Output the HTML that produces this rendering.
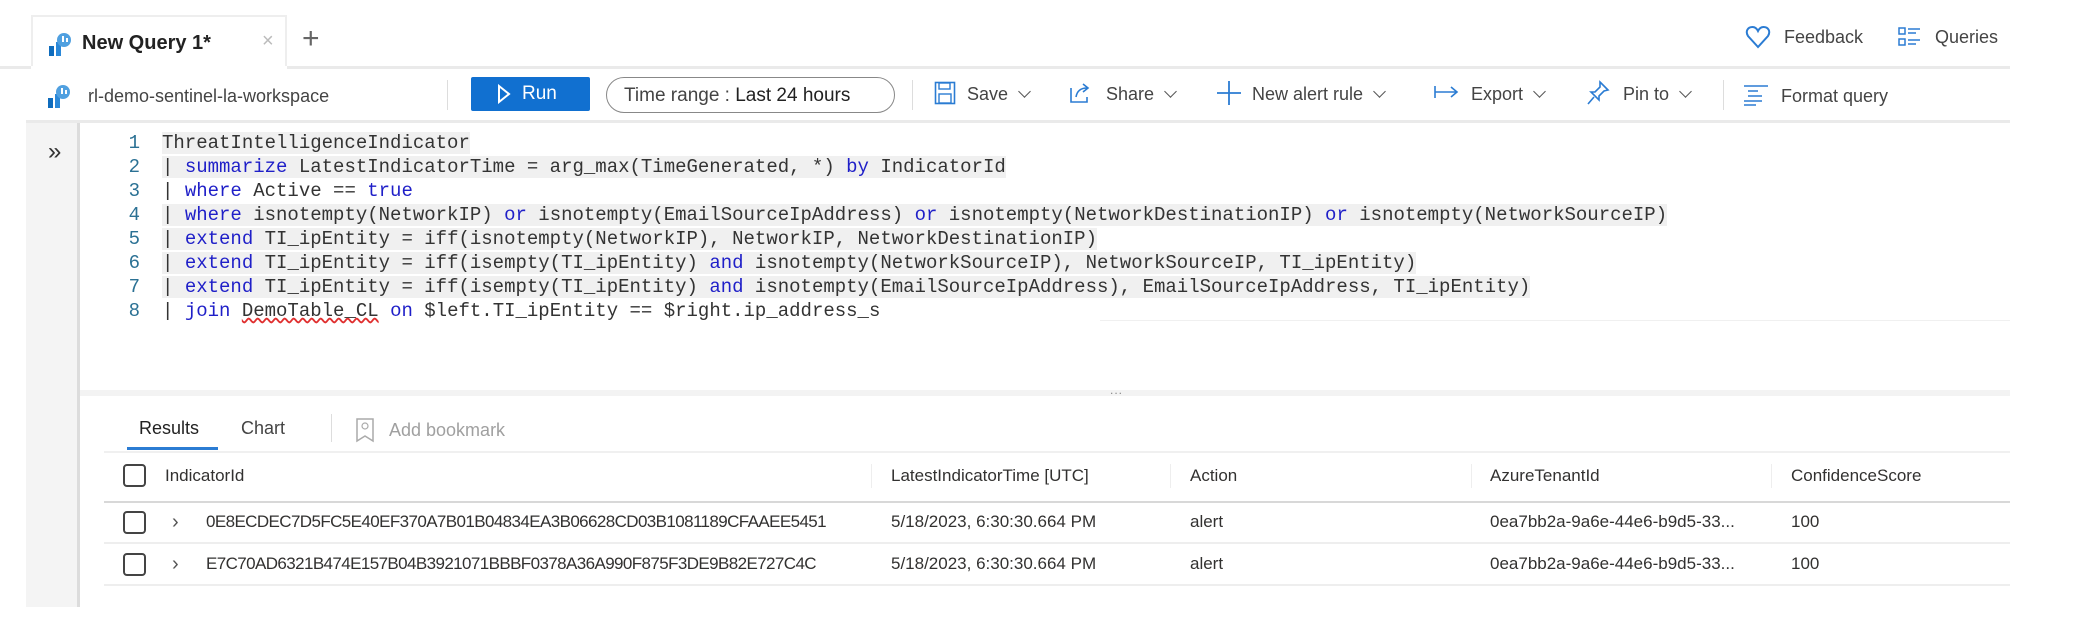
<!DOCTYPE html>
<html><head><meta charset="utf-8"><style>
*{margin:0;padding:0;box-sizing:border-box}
body{width:2078px;height:624px;background:#fff;position:relative;overflow:hidden;font-family:"Liberation Sans",sans-serif;color:#323130}
.a{position:absolute;white-space:nowrap}
.t{font-size:18px;line-height:24px}
.code{font-family:"Liberation Mono",monospace;font-size:19px;line-height:24px;color:#333}
.k{color:#1f1fc8}
.ln{color:#2b7194;font-family:"Liberation Mono",monospace;font-size:19px;width:30px;text-align:right}
.hl{background:#f0f0f0}
.chev{display:inline-block;width:9px;height:9px;border-right:1.5px solid #555;border-bottom:1.5px solid #555;transform:rotate(45deg);margin-left:12px;position:relative;top:-4px}
.cb{position:absolute;width:23px;height:23px;border:2px solid #444;border-radius:4px}
.cell{font-size:17px;color:#323130}
</style></head><body>
<!-- tab -->
<div class="a" style="left:31px;top:15px;width:256px;height:53px;border:2px solid #eee;border-bottom:none;background:#fff"></div>
<div class="a" style="left:0;top:66px;width:2010px;height:3px;background:#eaeaea"></div>
<div class="a" style="left:31px;top:66px;width:256px;height:3px;background:#fff"></div>
<svg class="a" style="left:48px;top:30px" width="24" height="28" viewBox="0 0 24 28"><rect x="1" y="16" width="5" height="10" fill="#0f6cbd"/><rect x="8" y="12" width="5" height="14" fill="#2b88d8"/><circle cx="16" cy="10" r="7" fill="#50a0e0"/><rect x="14" y="6" width="2" height="6" fill="#fff"/><rect x="18" y="8" width="2" height="4" fill="#fff"/></svg>
<div class="a t" style="left:82px;top:31px;font-size:20px;font-weight:bold;color:#222">New Query 1*</div>
<div class="a" style="left:262px;top:30px;font-size:20px;color:#bbb">×</div>
<div class="a" style="left:302px;top:22px;font-size:30px;color:#666;font-weight:300">+</div>
<!-- right top -->
<svg class="a" style="left:1745px;top:24px" width="26" height="26" viewBox="0 0 26 26"><path d="M13 23 L3 12 C0 7 3 3 7.5 3 C10 3 12 5 13 7 C14 5 16 3 18.5 3 C23 3 26 7 23 12 Z" fill="none" stroke="#2b7cd3" stroke-width="2"/></svg>
<div class="a t" style="left:1784px;top:25px;color:#444">Feedback</div>
<svg class="a" style="left:1898px;top:26px" width="24" height="22" viewBox="0 0 24 22"><rect x="1" y="2" width="6" height="6" fill="none" stroke="#2b7cd3" stroke-width="1.5"/><rect x="1" y="13" width="6" height="6" fill="none" stroke="#2b7cd3" stroke-width="1.5"/><path d="M10 3h12M10 7h8M10 14h12M10 18h8" stroke="#2b7cd3" stroke-width="1.5"/></svg>
<div class="a t" style="left:1935px;top:25px;color:#444">Queries</div>
<!-- toolbar -->
<svg class="a" style="left:47px;top:82px" width="24" height="28" viewBox="0 0 24 28"><rect x="1" y="16" width="5" height="10" fill="#0f6cbd"/><rect x="8" y="12" width="5" height="14" fill="#2b88d8"/><circle cx="16" cy="10" r="7" fill="#50a0e0"/><rect x="14" y="6" width="2" height="6" fill="#fff"/><rect x="18" y="8" width="2" height="4" fill="#fff"/></svg>
<div class="a t" style="left:88px;top:84px;color:#444">rl-demo-sentinel-la-workspace</div>
<div class="a" style="left:447px;top:80px;width:1px;height:30px;background:#ddd"></div>
<div class="a" style="left:471px;top:77px;width:119px;height:34px;background:#1170d0;border-radius:2px"></div>
<svg class="a" style="left:497px;top:84px" width="14" height="20" viewBox="0 0 14 20"><path d="M2 2 L12 10 L2 18 Z" fill="none" stroke="#fff" stroke-width="2"/></svg>
<div class="a t" style="left:522px;top:82px;color:#fff;font-size:19px">Run</div>
<div class="a" style="left:606px;top:77px;width:289px;height:36px;border:1.5px solid #888;border-radius:18px"></div>
<div class="a t" style="left:624px;top:84px;color:#444;font-size:19px">Time range : <span style="color:#222">Last 24 hours</span></div>
<div class="a" style="left:912px;top:80px;width:1px;height:30px;background:#ddd"></div>
<svg class="a" style="left:934px;top:81px" width="22" height="24" viewBox="0 0 22 24"><rect x="1.5" y="1.5" width="19" height="21" fill="none" stroke="#2b7cd3" stroke-width="1.6"/><rect x="5" y="2" width="11" height="6" fill="none" stroke="#2b7cd3" stroke-width="1.4"/><rect x="5" y="13" width="12" height="9" fill="none" stroke="#2b7cd3" stroke-width="1.4"/></svg>
<div class="a t" style="left:967px;top:82px;color:#444">Save<span class="chev"></span></div>
<svg class="a" style="left:1068px;top:80px" width="24" height="24" viewBox="0 0 24 24"><path d="M3 8v14h16v-5" fill="none" stroke="#2b7cd3" stroke-width="1.6"/><path d="M8 17c1-6 5-9 11-9M15 4l5 4-5 4" fill="none" stroke="#2b7cd3" stroke-width="1.6"/></svg>
<div class="a t" style="left:1106px;top:82px;color:#444">Share<span class="chev"></span></div>
<svg class="a" style="left:1216px;top:80px" width="26" height="26" viewBox="0 0 26 26"><path d="M13 1v24M1 13h24" stroke="#2b7cd3" stroke-width="1.8"/></svg>
<div class="a t" style="left:1252px;top:82px;color:#444">New alert rule<span class="chev"></span></div>
<svg class="a" style="left:1434px;top:84px" width="26" height="16" viewBox="0 0 26 16"><path d="M1 2v12M1 8h22M17 3l6 5-6 5" fill="none" stroke="#2b7cd3" stroke-width="1.6"/></svg>
<div class="a t" style="left:1471px;top:82px;color:#444">Export<span class="chev"></span></div>
<svg class="a" style="left:1586px;top:80px" width="24" height="26" viewBox="0 0 24 26"><path d="M14 2l8 8-4 1-5 5 0 4-8-8 4 0 5-5z M8 17l-6 7" fill="none" stroke="#2b7cd3" stroke-width="1.6"/></svg>
<div class="a t" style="left:1623px;top:82px;color:#444">Pin to<span class="chev"></span></div>
<div class="a" style="left:1723px;top:80px;width:1px;height:30px;background:#ddd"></div>
<svg class="a" style="left:1742px;top:84px" width="28" height="22" viewBox="0 0 28 22"><path d="M2 2h24M6 7h10M6 12h14M2 17h18M2 21h12" stroke="#2b7cd3" stroke-width="1.6"/></svg>
<div class="a t" style="left:1781px;top:84px;color:#444">Format query</div>
<div class="a" style="left:26px;top:120px;width:1984px;height:3px;background:#eaeaea"></div>
<!-- left gutter -->
<div class="a" style="left:26px;top:123px;width:52px;height:484px;background:#f4f4f4"></div>
<div class="a" style="left:77px;top:123px;width:3px;height:484px;background:#dcdcdc"></div>
<div class="a" style="left:48px;top:138px;font-size:24px;color:#333">»</div>
<!-- code -->
<div class="a ln" style="left:110px;top:131px;line-height:24px">1<br>2<br>3<br>4<br>5<br>6<br>7<br>8</div>
<div class="a code" style="left:162px;top:131px">
<div><span class="hl">ThreatIntelligenceIndicator</span></div>
<div><span class="hl">| <span class="k">summarize</span> LatestIndicatorTime = arg_max(TimeGenerated, *) <span class="k">by</span> IndicatorId</span></div>
<div>| <span class="k">where</span> Active == <span class="k">true</span></div>
<div><span class="hl">| <span class="k">where</span> isnotempty(NetworkIP) <span class="k">or</span> isnotempty(EmailSourceIpAddress) <span class="k">or</span> isnotempty(NetworkDestinationIP) <span class="k">or</span> isnotempty(NetworkSourceIP)</span></div>
<div><span class="hl">| <span class="k">extend</span> TI_ipEntity = iff(isnotempty(NetworkIP), NetworkIP, NetworkDestinationIP)</span></div>
<div><span class="hl">| <span class="k">extend</span> TI_ipEntity = iff(isempty(TI_ipEntity) <span class="k">and</span> isnotempty(NetworkSourceIP), NetworkSourceIP, TI_ipEntity)</span></div>
<div><span class="hl">| <span class="k">extend</span> TI_ipEntity = iff(isempty(TI_ipEntity) <span class="k">and</span> isnotempty(EmailSourceIpAddress), EmailSourceIpAddress, TI_ipEntity)</span></div>
<div>| <span class="k">join</span> <span style="text-decoration:underline wavy #e03030">DemoTable_CL</span> <span class="k">on</span> $left.TI_ipEntity == $right.ip_address_s</div>
</div>
<div class="a" style="left:1100px;top:320px;width:910px;height:1px;background:#f0f0f0"></div>
<!-- splitter -->
<div class="a" style="left:80px;top:390px;width:1930px;height:6px;background:#f3f3f3"></div>
<div class="a" style="left:1110px;top:383px;font-size:12px;color:#888;letter-spacing:1px">...</div>
<!-- result tabs -->
<div class="a t" style="left:139px;top:416px;color:#222">Results</div>
<div class="a" style="left:127px;top:447px;width:91px;height:3px;background:#2b7cd3"></div>
<div class="a t" style="left:241px;top:416px;color:#444">Chart</div>
<div class="a" style="left:331px;top:414px;width:1px;height:28px;background:#ddd"></div>
<svg class="a" style="left:355px;top:417px" width="20" height="26" viewBox="0 0 20 26"><path d="M2 2h16v22l-8-5-8 5z" fill="none" stroke="#aaa" stroke-width="1.5"/><circle cx="10" cy="9" r="3" fill="none" stroke="#aaa" stroke-width="1.2"/></svg>
<div class="a t" style="left:389px;top:418px;color:#a0a0a0">Add bookmark</div>
<div class="a" style="left:104px;top:451px;width:1906px;height:2px;background:#f0f0f0"></div>
<!-- header -->
<div class="cb" style="left:123px;top:464px"></div>
<div class="a cell" style="left:165px;top:466px">IndicatorId</div>
<div class="a" style="left:871px;top:464px;width:1px;height:24px;background:#eee"></div>
<div class="a cell" style="left:891px;top:466px">LatestIndicatorTime [UTC]</div>
<div class="a" style="left:1170px;top:464px;width:1px;height:24px;background:#eee"></div>
<div class="a cell" style="left:1190px;top:466px">Action</div>
<div class="a" style="left:1471px;top:464px;width:1px;height:24px;background:#eee"></div>
<div class="a cell" style="left:1490px;top:466px">AzureTenantId</div>
<div class="a" style="left:1771px;top:464px;width:1px;height:24px;background:#eee"></div>
<div class="a cell" style="left:1791px;top:466px">ConfidenceScore</div>
<div class="a" style="left:104px;top:501px;width:1906px;height:2px;background:#d8d8d8"></div>
<!-- rows -->
<div class="cb" style="left:123px;top:511px"></div>
<div class="a cell" style="left:172px;top:511px;font-size:20px;color:#555">›</div>
<div class="a cell" style="left:206px;top:512px;letter-spacing:-0.6px">0E8ECDEC7D5FC5E40EF370A7B01B04834EA3B06628CD03B1081189CFAAEE5451</div>
<div class="a cell" style="left:891px;top:512px">5/18/2023, 6:30:30.664 PM</div>
<div class="a cell" style="left:1190px;top:512px">alert</div>
<div class="a cell" style="left:1490px;top:512px">0ea7bb2a-9a6e-44e6-b9d5-33...</div>
<div class="a cell" style="left:1791px;top:512px">100</div>
<div class="a" style="left:104px;top:542px;width:1906px;height:2px;background:#eee"></div>
<div class="cb" style="left:123px;top:553px"></div>
<div class="a cell" style="left:172px;top:553px;font-size:20px;color:#555">›</div>
<div class="a cell" style="left:206px;top:554px;letter-spacing:-0.6px">E7C70AD6321B474E157B04B3921071BBBF0378A36A990F875F3DE9B82E727C4C</div>
<div class="a cell" style="left:891px;top:554px">5/18/2023, 6:30:30.664 PM</div>
<div class="a cell" style="left:1190px;top:554px">alert</div>
<div class="a cell" style="left:1490px;top:554px">0ea7bb2a-9a6e-44e6-b9d5-33...</div>
<div class="a cell" style="left:1791px;top:554px">100</div>
<div class="a" style="left:104px;top:584px;width:1906px;height:2px;background:#eee"></div>
</body></html>
